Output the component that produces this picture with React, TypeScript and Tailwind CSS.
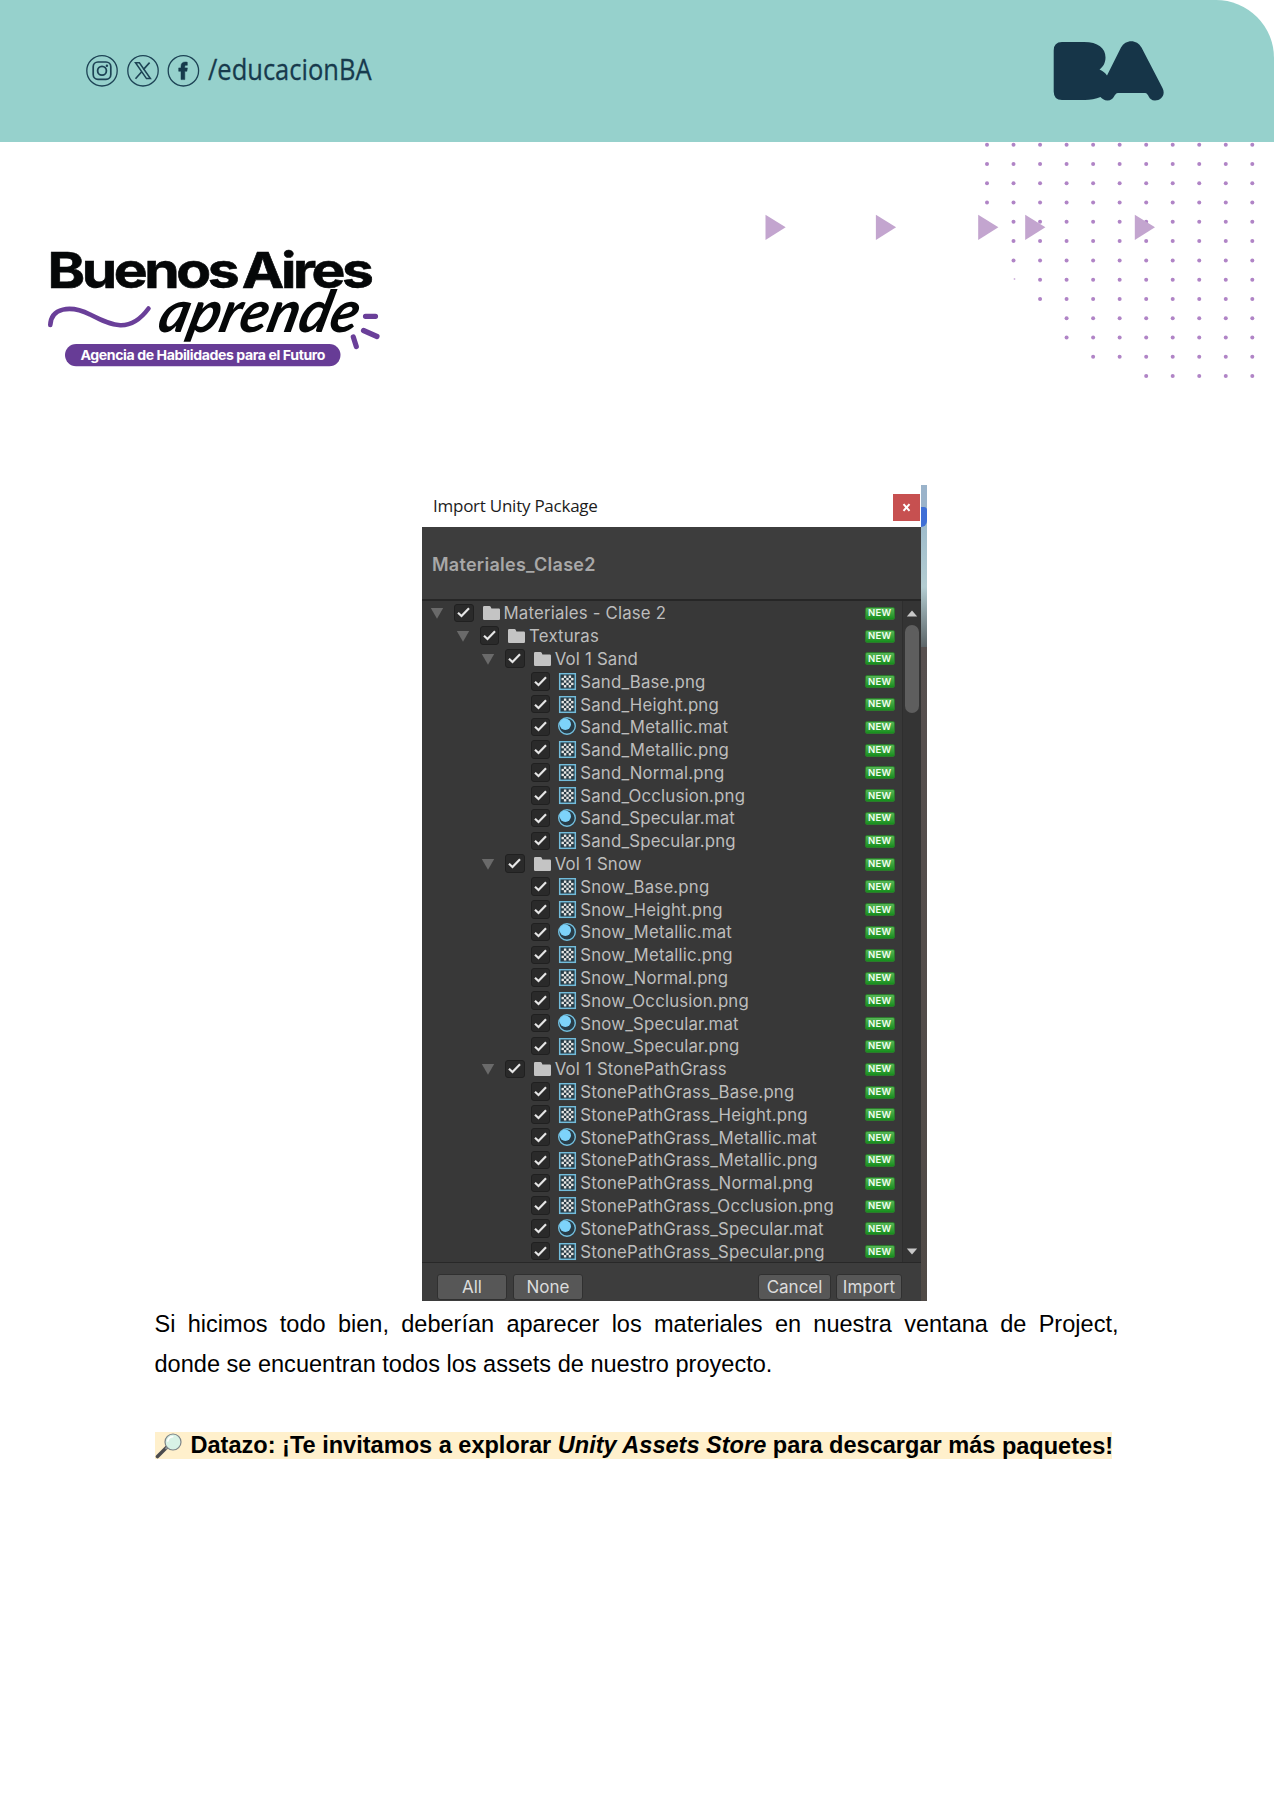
import React from "react";

type Kind = "folder" | "png" | "mat";
type Entry = { name: string; level: number; kind: Kind };

const MAPS: [string, Kind][] = [
  ["Base", "png"],
  ["Height", "png"],
  ["Metallic", "mat"],
  ["Metallic", "png"],
  ["Normal", "png"],
  ["Occlusion", "png"],
  ["Specular", "mat"],
  ["Specular", "png"],
];

const ENTRIES: Entry[] = [
  { name: "Materiales - Clase 2", level: 0, kind: "folder" },
  { name: "Texturas", level: 1, kind: "folder" },
  ...["Sand", "Snow", "StonePathGrass"].flatMap((set): Entry[] => [
    { name: `Vol 1 ${set}`, level: 2, kind: "folder" },
    ...MAPS.map(([map, kind]): Entry => ({ name: `${set}_${map}.${kind}`, level: 3, kind })),
  ]),
];

const INDENT = ["pl-[8px]", "pl-[33.6px]", "pl-[59.2px]", "pl-[84.8px]"];

function SocialIcons() {
  return (
    <svg width="120" height="34" viewBox="84 54 120 34" fill="none" stroke="#1d4355" strokeWidth="1.3">
      <circle cx="102" cy="70.8" r="15.2" />
      <circle cx="143" cy="70.8" r="15.2" />
      <circle cx="183.4" cy="70.8" r="15.2" />
      <rect x="93.2" y="62" width="17.6" height="17.4" rx="4.8" strokeWidth="1.7" />
      <circle cx="102" cy="70.8" r="4.4" strokeWidth="1.8" />
      <circle cx="106.9" cy="65.8" r="1.2" fill="#1d4355" stroke="none" />
      <path d="M135.5 62.8h3.9l11 15.8h-3.9z" strokeWidth="1.5" />
      <path d="M149.6 62.6l-6.3 7M141.7 71.8l-6.2 7" strokeWidth="1.6" />
      <path
        d="M181 79.6v-8.3h-2.300v-3.400h2.300v-1.600c0-3 1.700-4.300 4.300-4.300.9 0 1.500.1 2 .2v3.100h-1.200c-1 0-1.300.5-1.300 1.400v1.200h2.600l-.5 3.400h-2.100v8.300z"
        fill="#173a4c"
        stroke="#173a4c"
        strokeWidth=".5"
      />
    </svg>
  );
}

function BrandMark() {
  return (
    <svg width="112" height="62" viewBox="1053 40 112 62">
      <path
        fill="#163548"
        d="M1062 42H1084C1098 42 1105.500 48 1105.500 57.500C1105.500 63 1103 67 1099.500 69.500C1103 71 1105.500 73 1107 75.500L1121 47.500C1125.500 39 1137 39 1141.500 47.500L1162.500 88C1166 95 1161 100.500 1155 100.500C1148 100.500 1149 93 1145 93H1118C1114 93 1114.500 100.500 1107.500 100.500C1104 100.500 1102 98.500 1100.500 97C1096 99 1090 100 1085 100H1062Q1053.700 100 1053.700 91.500V50.500Q1053.700 42 1062 42Z"
      />
    </svg>
  );
}

function ProgramLogo() {
  return (
    <svg width="340" height="130" viewBox="45 242 340 130">
      <text x="47.5" y="288" textLength="323" lengthAdjust="spacingAndGlyphs" fill="#050708" stroke="#050708" strokeWidth=".6" fontSize="50" className="font-['Inter'] font-bold tracking-[-3px] [word-spacing:-4px]">
        Buenos Aires
      </text>
      <path d="M50.300 325C51 308 70 304.500 90 314.500S129 335 148.500 308.500" fill="none" stroke="#6a3f99" strokeWidth="4.600" strokeLinecap="round" />
      <rect x="65" y="344" width="275.500" height="22.200" rx="11.100" fill="#673c96" />
      <text x="80.500" y="360" textLength="244.500" lengthAdjust="spacingAndGlyphs" fill="#fff" fontSize="13.600" className="font-['Inter'] font-bold tracking-[-0.4px]">
        Agencia de Habilidades para el Futuro
      </text>
      <g transform="translate(156 331.500) skewX(-14)">
        <text x="0" y="0" textLength="199" lengthAdjust="spacingAndGlyphs" fill="#050708" fontSize="58" className="font-['Lato'] font-bold italic">
          aprende
        </text>
      </g>
      <g stroke="#6a3f99" strokeWidth="5.200" strokeLinecap="round">
        <path d="M365.500 316.300H375.500M363.500 330.500L377 336.500M353.300 337L356.300 346.500" />
      </g>
    </svg>
  );
}

// Rows of dots visible in each column, left to right.
const DOT_ROWS = [4, 7, 9, 11, 12, 12, 13, 13, 13, 13, 13];
const ARROWS = [765.5, 875.9, 978.2, 1025.2, 1134.8];

function DotPattern() {
  return (
    <svg width="514" height="250" viewBox="760 142 514 250">
      <g fill="#b084c6">
        {DOT_ROWS.map((rows, c) =>
          Array.from({ length: rows }, (_, r) => <circle key={`${c}-${r}`} cx={987 + c * 26.53} cy={144.7 + r * 19.28} r="2" />),
        )}
        <circle cx="1014.500" cy="279" r=".9" opacity=".6" />
      </g>
      <g fill="#c3a5cf">
        {ARROWS.map((x) => (
          <path key={x} d={`M${x} 214.700v25.200l20.200-12.600z`} />
        ))}
      </g>
    </svg>
  );
}

function Checkbox() {
  return (
    <span className="mb-px flex h-[18.5px] w-[19.5px] shrink-0 items-center justify-center rounded-[3px] border border-[#202020] bg-[#2a2a2a]">
      <svg width="13" height="11" viewBox="0 0 13 11" fill="none" stroke="#e6e6e6" strokeWidth="2.200">
        <path d="M1 5.800l3.500 3.200L12 1.200" />
      </svg>
    </span>
  );
}

function FileIcon({ kind }: { kind: Kind }) {
  if (kind === "folder")
    return (
      <svg width="19" height="18" viewBox="0 0 19 18" fill="#c4c4c4">
        <path d="M1 3.200q0-1.200 1.200-1.200h5.200q1 0 1.400 1l.6 1.600h7.400q1.200 0 1.200 1.200v9q0 1.200-1.200 1.200H2.200Q1 16 1 14.800z" />
      </svg>
    );
  if (kind === "mat")
    return (
      <svg width="19" height="20" viewBox="0 0 19 20">
        <circle cx="9" cy="9" r="8.300" fill="#283c47" stroke="#72bfdf" strokeWidth="1.400" />
        <circle cx="7.300" cy="7.300" r="5.700" fill="#7dd3fa" />
      </svg>
    );
  return (
    <svg width="19" height="18" viewBox="0 0 19 18">
      <rect x="1.700" y=".7" width="15.600" height="15.600" fill="#283a44" stroke="#72bcdb" strokeWidth="1.500" />
      {[0, 1, 2, 3, 4].map((r) =>
        [0, 1, 2, 3, 4].map((c) =>
          (r + c) % 2 ? <rect key={`${r}${c}`} x={3.5 + c * 2.4} y={2.5 + r * 2.4} width="2.400" height="2.400" fill="#e8e8e6" /> : null,
        ),
      )}
    </svg>
  );
}

function Row({ entry }: { entry: Entry }) {
  return (
    <div className={`flex h-[22.8px] items-center ${INDENT[entry.level]}`}>
      <svg width="14" height="12" viewBox="0 0 14 12" className="mr-[10px] shrink-0">
        {entry.kind === "folder" && <path d="M.8 1h12.400L7 11.800z" fill="#6a6a6a" />}
      </svg>
      <Checkbox />
      <span className="ml-[8px] mr-[3px] shrink-0">
        <FileIcon kind={entry.kind} />
      </span>
      <span className="flex-1 whitespace-nowrap pt-px text-[16.8px] tracking-[0.18px] text-[#bdbdbd]">{entry.name}</span>
      <span className="mr-[7px] flex h-[13px] w-[30.5px] shrink-0 items-center justify-center rounded-[2px] border border-[#2c7a2c] bg-linear-to-b from-[#55b555] to-[#148f1c] text-[9.5px] font-semibold tracking-[0.3px] text-[#effff0]">
        NEW
      </span>
    </div>
  );
}

function Button({ label, className }: { label: string; className: string }) {
  return (
    <button className={`flex h-[25.5px] items-center justify-center rounded-[3px] border border-[#303030] bg-[#575757] pt-[2px] text-[17px] text-[#dcdcdc] ${className}`}>
      {label}
    </button>
  );
}

function ImportDialog() {
  return (
    <div className="ml-[422px] flex h-[816px] w-[505px]">
      <div className="flex w-[499px] flex-col bg-[#383838] font-['Inter',sans-serif]">
        <div className="flex h-[42px] items-start justify-between bg-white pl-[11px] pr-[1px] pt-[9px]">
          <span className="whitespace-nowrap font-['Open_Sans',sans-serif] text-[17px] leading-[24px] tracking-[-0.25px] text-[#1c1c1c]">Import Unity Package</span>
          <span className="flex h-[27px] w-[27px] items-center justify-center bg-[#c75050]">
            <svg width="9" height="9" viewBox="0 0 9 9" stroke="#fff" strokeWidth="2">
              <path d="M1.500 1.200l6 6.600M7.500 1.200l-6 6.600" />
            </svg>
          </span>
        </div>
        <div className="flex h-[74px] items-center border-b-2 border-[#262626] bg-[#3d3d3d] pl-[10px] pt-[3px] text-[18px] font-semibold tracking-[0.27px] text-[#a8a8a8]">
          Materiales_Clase2
        </div>
        <div className="flex h-[661px]">
          <div className="w-[480px] shrink-0 pt-px">
            {ENTRIES.map((e) => (
              <Row key={e.name} entry={e} />
            ))}
          </div>
          <div className="flex flex-1 flex-col items-center justify-between border-l border-[#2e2e2e] bg-[#343434] pb-[7px] pt-[8.500px]">
            <div className="flex flex-col items-center gap-[8px]">
              <svg width="12" height="7" viewBox="0 0 12 7" fill="#c8c8c8">
                <path d="M.8 6.600L6 .4l5.200 6.200z" />
              </svg>
              <div className="h-[88px] w-[14px] rounded-full bg-[#5e5e5e]" />
            </div>
            <svg width="12" height="7" viewBox="0 0 12 7" fill="#c8c8c8">
              <path d="M.8.4h10.400L6 6.600z" />
            </svg>
          </div>
        </div>
        <div className="flex flex-1 items-start border-t border-[#282828] bg-[#3d3d3d] pl-[15px] pt-[11px]">
          <Button label="All" className="w-[70px]" />
          <Button label="None" className="ml-[6px] w-[70px]" />
          <Button label="Cancel" className="ml-[175px] w-[73px]" />
          <Button label="Import" className="ml-[5px] w-[66px]" />
        </div>
      </div>
      <div className="flex w-[6px] flex-col">
        <div className="h-[22px] bg-[#9ab3ca]" />
        <div className="bg-[#9fbccb]">
          <div className="h-[20px] rounded-br-[6px] rounded-tr-[3px] bg-[#3f6fd6]" />
        </div>
        <div className="h-[120px] bg-linear-to-b from-[#9fbccb] via-[#b4cdd2] to-[#5d6669]" />
        <div className="flex-1 bg-linear-to-b from-[#57504f] to-[#504a46]" />
      </div>
    </div>
  );
}

function Magnifier() {
  return (
    <svg width="27" height="26" viewBox="0 0 27 26" className="shrink-0">
      <path d="M11.500 14.500L2.500 23.500" stroke="#4c4c4e" strokeWidth="3.600" strokeLinecap="round" />
      <path d="M14 12.500l-3.500 3.500" stroke="#8e9396" strokeWidth="2" />
      <circle cx="18" cy="9" r="8" fill="#d8f2e6" stroke="#7d8488" strokeWidth="1.200" />
      <path d="M12.800 8a5.200 5.200 0 0 1 5-4.200" stroke="#fff" strokeWidth="1.600" fill="none" strokeLinecap="round" />
    </svg>
  );
}

export default function App() {
  return (
    <main className="h-[1800px] w-[1274px] overflow-hidden bg-white">
      <header className="flex h-[142px] items-start rounded-tr-[58px] bg-[#96d1cc]">
        <div className="ml-[84px] mt-[54px]">
          <SocialIcons />
        </div>
        <svg width="170" height="60" viewBox="204 40 170 60" className="mt-[40px]">
          <text x="208" y="80" textLength="163.500" lengthAdjust="spacingAndGlyphs" fontSize="29" fill="#173a4c" stroke="#173a4c" strokeWidth=".3" className="font-['Open_Sans']">
            /educacionBA
          </text>
        </svg>
        <div className="ml-[679px] mt-[40px]">
          <BrandMark />
        </div>
      </header>
      <section className="flex h-[343px] items-start justify-between">
        <div className="ml-[45px] mt-[100px]">
          <ProgramLogo />
        </div>
        <DotPattern />
      </section>
      <ImportDialog />
      <article className="ml-[154.5px] w-[964px] font-['Liberation_Sans',sans-serif] text-[23.55px] text-black">
        <p className="mt-[3px] text-justify leading-[40px]">
          Si hicimos todo bien, deberían aparecer los materiales en nuestra ventana de Project, donde se encuentran todos los assets de nuestro proyecto.
        </p>
        <p className="mt-[48px] flex h-[27px] w-[957px] items-center whitespace-nowrap bg-[#fff0cc] font-bold leading-[27px]">
          <Magnifier />
          <span className="ml-[9px]">
            Datazo: ¡Te invitamos a explorar <em>Unity Assets Store</em> para descargar más <span className="relative top-px">paquetes!</span>
          </span>
        </p>
      </article>
    </main>
  );
}
